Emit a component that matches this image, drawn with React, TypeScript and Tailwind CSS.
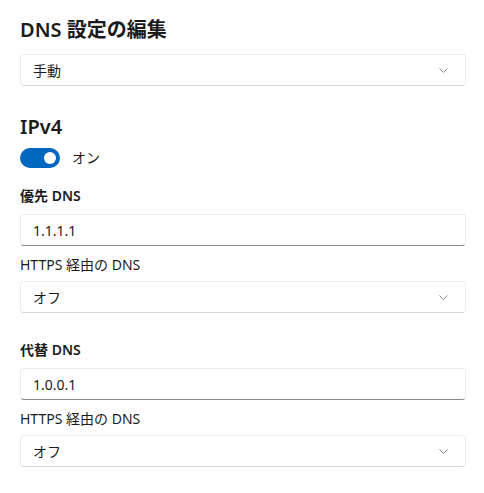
import React from "react";

const font = { fontFamily: '"Noto Sans", "Noto Sans CJK JP", sans-serif' };

function Chevron() {
  return (
    <svg width="9" height="5" viewBox="0 0 9 5" className="text-[#8a8a8a]">
      <path d="M0.5 0.5 L4.5 4.5 L8.5 0.5" fill="none" stroke="currentColor" strokeWidth="1" />
    </svg>
  );
}

function Select({ value, className }: { value: string; className?: string }) {
  return (
    <div
      className={
        "flex h-8 items-center justify-between rounded-[4px] border border-[#ececec] border-b-[#d6d6d6] bg-white pl-3 pr-[17px] " +
        (className ?? "")
      }
    >
      <span className="text-[14px] text-[#1b1b1b]">{value}</span>
      <Chevron />
    </div>
  );
}

function Input({ value, className }: { value: string; className?: string }) {
  return (
    <div
      className={
        "flex h-8 items-center rounded-[4px] border border-[#ececec] border-b-[#8a8a8a] bg-white px-3 " +
        (className ?? "")
      }
    >
      <span className="text-[14px] text-[#1b1b1b]">{value}</span>
    </div>
  );
}

export default function App() {
  return (
    <div className="min-h-[493px] w-[484px] bg-white pl-5 pr-[18px] pt-4 text-[#1b1b1b]" style={font}>
      <h1 className="text-[20px] font-semibold leading-[28px]">DNS 設定の編集</h1>
      <Select value="手動" className="mt-[10px]" />

      <h2 className="mt-[27px] text-[20px] font-semibold leading-[28px]">IPv4</h2>
      <div className="mt-[7px] flex items-center">
        <div className="flex h-5 w-10 items-center justify-end rounded-full bg-[#0067c0] pr-[4px]">
          <div className="h-3 w-3 rounded-full bg-white" />
        </div>
        <span className="ml-3 text-[14px] leading-5">オン</span>
      </div>

      <div className="mt-[18px] text-[14px] font-semibold leading-5">優先 DNS</div>
      <Input value="1.1.1.1" className="mt-2" />
      <div className="mt-[9px] text-[14px] leading-5">HTTPS 経由の DNS</div>
      <Select value="オフ" className="mt-[6px]" />

      <div className="mt-[27px] text-[14px] font-semibold leading-5">代替 DNS</div>
      <Input value="1.0.0.1" className="mt-2" />
      <div className="mt-[9px] text-[14px] leading-5">HTTPS 経由の DNS</div>
      <Select value="オフ" className="mt-[6px]" />
    </div>
  );
}
